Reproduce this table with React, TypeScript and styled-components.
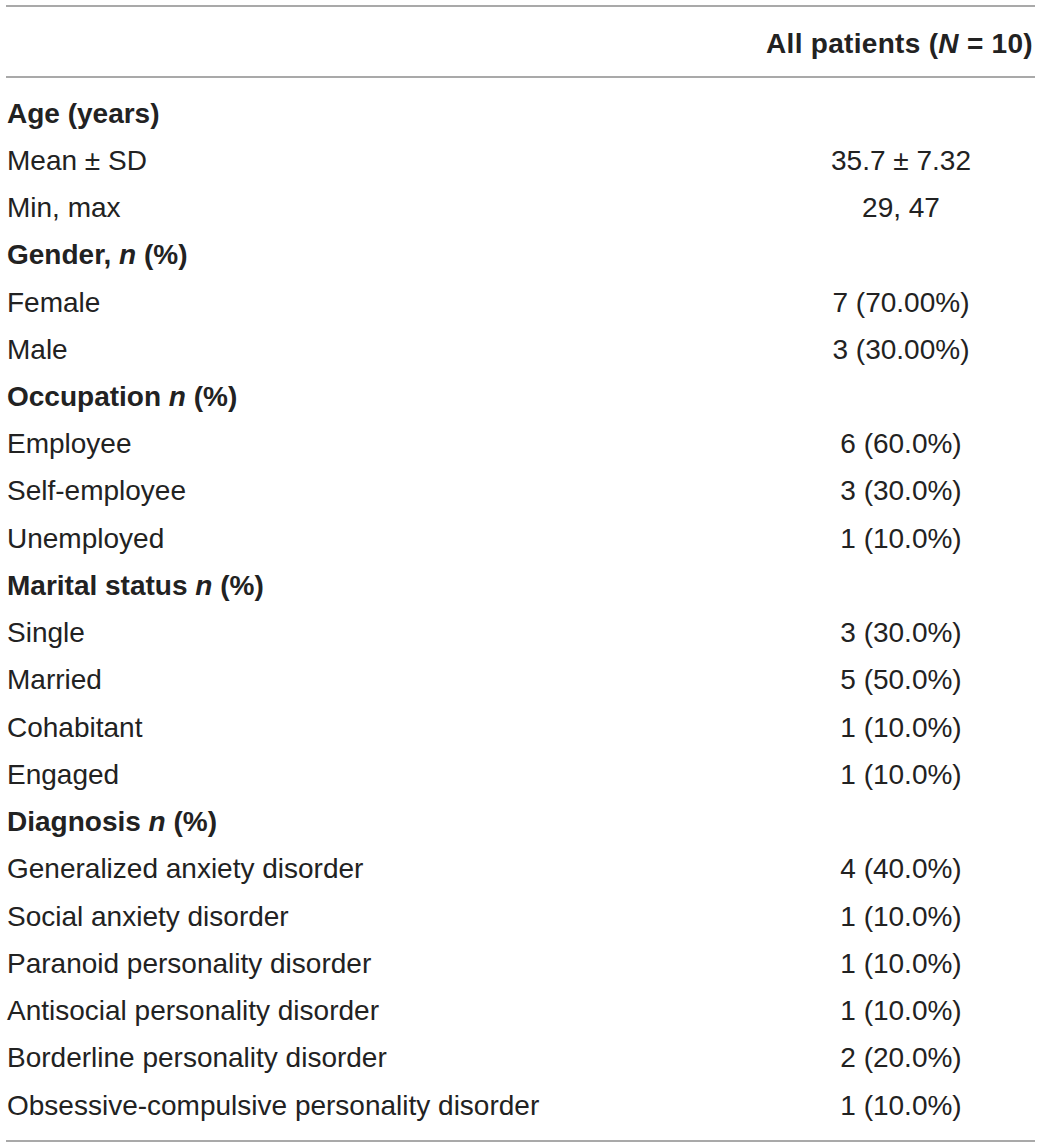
import React from "react";
import styled, { createGlobalStyle } from "styled-components";

const Global = createGlobalStyle`
  html, body { margin: 0; padding: 0; background: #ffffff; }
  body { font-family: "Liberation Sans", Arial, Helvetica, sans-serif; color: #222222; }
`;

const TableBox = styled.div`
  width: 1029px;
  margin: 5px 0 0 6px;
  border-top: 2px solid #a9a9a9;
  border-bottom: 2px solid #a9a9a9;
`;

const HeaderRow = styled.div`
  display: grid;
  grid-template-columns: 1fr 268px;
  height: 69px;
  align-items: center;
  border-bottom: 2px solid #a9a9a9;
`;

const HeadCell = styled.div`
  grid-column: 2;
  justify-self: end;
  padding: 4px 2px 0 0;
  font-size: 28px;
  font-weight: 700;
  letter-spacing: 0.3px;
  white-space: nowrap;
`;

const Body = styled.div`
  display: flex;
  flex-direction: column;
  padding: 12px 0 11px;
`;

const Row = styled.div`
  display: grid;
  grid-template-columns: 1fr 268px;
  height: 47.24px;
  align-items: center;
  font-size: 28px;
`;

const Label = styled.div<{ $section?: boolean }>`
  padding-left: 1px;
  font-weight: ${(p) => (p.$section ? 700 : 400)};
  white-space: nowrap;
`;

const Value = styled.div`
  text-align: center;
  white-space: nowrap;
`;

type Item = { label: React.ReactNode; value?: string; section?: boolean };

const rows: Item[] = [
  { label: "Age (years)", section: true },
  { label: "Mean ± SD", value: "35.7 ± 7.32" },
  { label: "Min, max", value: "29, 47" },
  { label: <>Gender, <i>n</i> (%)</>, section: true },
  { label: "Female", value: "7 (70.00%)" },
  { label: "Male", value: "3 (30.00%)" },
  { label: <>Occupation <i>n</i> (%)</>, section: true },
  { label: "Employee", value: "6 (60.0%)" },
  { label: "Self-employee", value: "3 (30.0%)" },
  { label: "Unemployed", value: "1 (10.0%)" },
  { label: <>Marital status <i>n</i> (%)</>, section: true },
  { label: "Single", value: "3 (30.0%)" },
  { label: "Married", value: "5 (50.0%)" },
  { label: "Cohabitant", value: "1 (10.0%)" },
  { label: "Engaged", value: "1 (10.0%)" },
  { label: <>Diagnosis <i>n</i> (%)</>, section: true },
  { label: "Generalized anxiety disorder", value: "4 (40.0%)" },
  { label: "Social anxiety disorder", value: "1 (10.0%)" },
  { label: "Paranoid personality disorder", value: "1 (10.0%)" },
  { label: "Antisocial personality disorder", value: "1 (10.0%)" },
  { label: "Borderline personality disorder", value: "2 (20.0%)" },
  { label: "Obsessive-compulsive personality disorder", value: "1 (10.0%)" },
];

export default function App() {
  return (
    <>
      <Global />
      <TableBox>
        <HeaderRow>
          <HeadCell>
            All patients (<i>N</i> = 10)
          </HeadCell>
        </HeaderRow>
        <Body>
          {rows.map((r, i) => (
            <Row key={i}>
              <Label $section={r.section}>{r.label}</Label>
              <Value>{r.value ?? ""}</Value>
            </Row>
          ))}
        </Body>
      </TableBox>
    </>
  );
}
